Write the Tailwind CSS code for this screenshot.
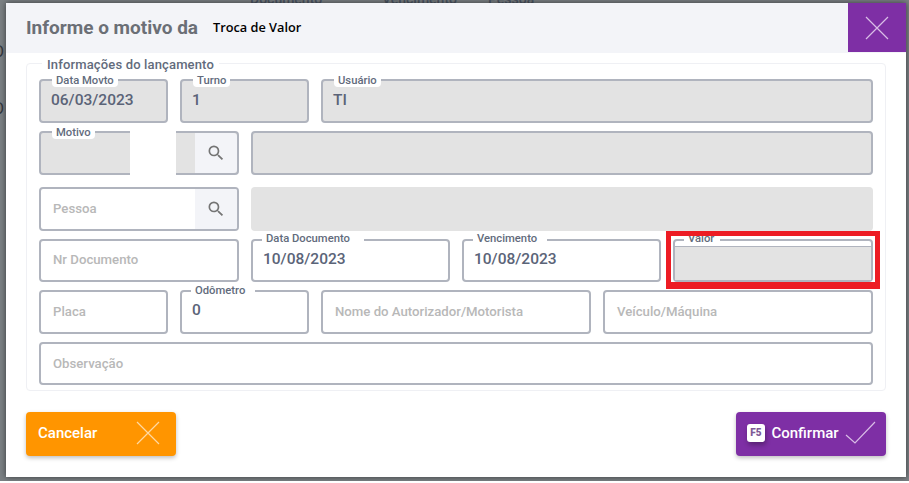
<!DOCTYPE html>
<html lang="pt-BR">
<head>
    <meta charset="UTF-8">
    <title>Informe o motivo da Troca de Valor</title>
    <script src="https://cdn.jsdelivr.net/npm/@tailwindcss/browser@4"></script>
</head>
<body class="bg-white font-['Roboto',sans-serif] w-[909px] h-[483px] overflow-hidden">

    <!-- fundo escurecido atras do modal -->
    <div class="relative h-[481px] bg-[#7b8084] pl-[6px] pt-[3px] overflow-hidden">
        <div class="absolute -top-[11px] left-[250px] flex text-[14px] font-medium text-[#4b5563]">
            <span class="w-[132px]">Documento</span><span class="w-[106px]">Vencimento</span><span>Pessoa</span>
        </div>
        <span class="absolute left-[-7px] top-[40px] text-[16px] text-[#33383d]">O</span>
        <span class="absolute left-[-7px] top-[97px] text-[16px] text-[#33383d]">O</span>

        <div class="relative w-[900px] h-[474px] bg-white flex flex-col shadow-[0_0_6px_rgba(0,0,0,0.55)]">
            <!-- cabecalho -->
            <div class="h-[50px] bg-[#f3f4f8] flex items-center justify-between">
                <div class="pl-[20px] flex items-center">
                    <span class="text-[19px] font-bold text-[#6b6f76] w-[187px]">Informe o motivo da</span>
                    <span class="font-['Open_Sans',sans-serif] text-[12.75px] font-semibold text-black">Troca de Valor</span>
                </div>
                <div class="w-[58px] h-[49px] self-start bg-[#7e2fa5] flex items-center justify-center">
                    <svg width="26" height="26" viewBox="0 0 26 26" fill="none" stroke="#d9bde6" stroke-width="1.2"><path d="M2 2 L24 24 M24 2 L2 24"/></svg>
                </div>
            </div>

            <!-- informacoes -->
            <div class="relative mx-[20px] mt-[10px] h-[328px] border border-[#eff0f4] rounded px-[12px] pt-[15px]">
                <span class="absolute left-[15px] -top-[6px] bg-white px-[5px] text-[13px] leading-[14px] font-medium text-[#626b7c] tracking-[0.15px]">Informações do lançamento</span>

                <div class="grid grid-cols-[129px_129px_1fr] gap-x-[12px] h-[44px]">
                    <div class="relative rounded border-2 border-[#b0b4be] bg-[#e3e3e3] pl-[10px] flex items-center text-[15.5px] font-medium text-[#5b6478]">
                        <span class="absolute left-[11px] -top-[6px] bg-white rounded px-[4px] text-[11.25px] leading-[12px] font-medium text-[#626b7c]">Data Movto</span>06/03/2023
                    </div>
                    <div class="relative rounded border-2 border-[#b0b4be] bg-[#e3e3e3] pl-[10px] flex items-center text-[15.5px] font-medium text-[#5b6478]">
                        <span class="absolute left-[11px] -top-[6px] bg-white rounded px-[4px] text-[11.25px] leading-[12px] font-medium text-[#626b7c]">Turno</span>1
                    </div>
                    <div class="relative rounded border-2 border-[#b0b4be] bg-[#e3e3e3] pl-[10px] flex items-center text-[15.5px] font-medium text-[#5b6478]">
                        <span class="absolute left-[11px] -top-[6px] bg-white rounded px-[4px] text-[11.25px] leading-[12px] font-medium text-[#626b7c]">Usuário</span>TI
                    </div>
                </div>

                <div class="grid grid-cols-[200px_1fr] gap-x-[12px] h-[44px] mt-[8px]">
                    <div class="relative rounded border-2 border-[#b0b4be] bg-[#e3e3e3] flex justify-end">
                        <span class="absolute left-[11px] -top-[6px] bg-white rounded px-[4px] text-[11.25px] leading-[12px] font-medium text-[#626b7c]">Motivo</span>
                        <div class="w-[42px] bg-[#f3f4f8] rounded-r flex items-center justify-center">
                            <svg width="20" height="20" viewBox="0 0 24 24" fill="#757575"><path d="M15.5 14h-.79l-.28-.27A6.47 6.47 0 0 0 16 9.5 6.5 6.5 0 1 0 9.5 16c1.61 0 3.09-.59 4.23-1.57l.27.28v.79l5 4.99L20.49 19l-4.99-5zm-6 0C7.01 14 5 11.99 5 9.5S7.01 5 9.5 5 14 7.01 14 9.5 11.99 14 9.5 14z"/></svg>
                        </div>
                        <!-- trecho apagado no print -->
                        <div class="absolute left-[89px] -top-[2px] -bottom-[2px] w-[46px] bg-white"></div>
                    </div>
                    <div class="rounded border-2 border-[#b0b4be] bg-[#e3e3e3]"></div>
                </div>

                <div class="grid grid-cols-[200px_1fr] gap-x-[12px] h-[44px] mt-[12px]">
                    <div class="rounded border-2 border-[#b0b4be] bg-white flex items-center justify-between overflow-hidden">
                        <span class="pl-[12px] text-[13.2px] font-medium text-[#b8b8b8]">Pessoa</span>
                        <div class="w-[42px] h-full bg-[#f3f4f8] flex items-center justify-center">
                            <svg width="20" height="20" viewBox="0 0 24 24" fill="#757575"><path d="M15.5 14h-.79l-.28-.27A6.47 6.47 0 0 0 16 9.5 6.5 6.5 0 1 0 9.5 16c1.61 0 3.09-.59 4.23-1.57l.27.28v.79l5 4.99L20.49 19l-4.99-5zm-6 0C7.01 14 5 11.99 5 9.5S7.01 5 9.5 5 14 7.01 14 9.5 11.99 14 9.5 14z"/></svg>
                        </div>
                    </div>
                    <div class="rounded bg-[#e3e3e3]"></div>
                </div>

                <div class="grid grid-cols-[200px_199px_199px_1fr] gap-x-[12px] h-[43px] mt-[8px]">
                    <div class="rounded border-2 border-[#b0b4be] bg-white pl-[12px] pb-[1px] flex items-center text-[13.2px] font-medium text-[#b8b8b8]">Nr Documento</div>
                    <div class="relative rounded border-2 border-[#b0b4be] bg-white pl-[10px] pb-[1px] flex items-center text-[15.5px] font-medium text-[#5b6478]">
                        <span class="absolute left-[9px] -top-[8px] bg-white px-[4px] pr-[14px] text-[11.25px] leading-[12px] font-medium text-[#626b7c]">Data Documento</span>10/08/2023
                    </div>
                    <div class="relative rounded border-2 border-[#b0b4be] bg-white pl-[10px] pb-[1px] flex items-center text-[15.5px] font-medium text-[#5b6478]">
                        <span class="absolute left-[9px] -top-[8px] bg-white px-[4px] pr-[10px] text-[11.25px] leading-[12px] font-medium text-[#626b7c]">Vencimento</span>10/08/2023
                    </div>
                    <div class="relative rounded border-2 border-[#b0b4be] bg-white flex flex-col">
                        <span class="absolute left-[9px] -top-[8px] bg-white px-[4px] pr-[6px] text-[11.25px] leading-[12px] font-medium text-[#626b7c]">Valor</span>
                        <div class="mt-[5px] flex-1 bg-[#e3e3e3] border-t border-[#b0b4be]"></div>
                        <!-- destaque vermelho -->
                        <div class="absolute -left-[9px] -right-[9px] -top-[10px] -bottom-[9px] border-[5px] border-b-[7px] border-[#ed1c24]"></div>
                    </div>
                </div>

                <div class="grid grid-cols-[129px_129px_270px_1fr] gap-x-[12px] h-[44px] mt-[8px]">
                    <div class="rounded border-2 border-[#b0b4be] bg-white pl-[12px] flex items-center text-[13.2px] font-medium text-[#b8b8b8]">Placa</div>
                    <div class="relative rounded border-2 border-[#b0b4be] bg-white pl-[10px] pb-[2px] flex items-center text-[15.5px] font-medium text-[#5b6478]">
                        <span class="absolute left-[9px] -top-[7px] bg-white px-[4px] pr-[10px] text-[11.25px] leading-[12px] font-medium text-[#626b7c]">Odômetro</span>0
                    </div>
                    <div class="rounded border-2 border-[#b0b4be] bg-white pl-[12px] flex items-center text-[13.2px] font-medium text-[#b8b8b8]">Nome do Autorizador/Motorista</div>
                    <div class="rounded border-2 border-[#b0b4be] bg-white pl-[12px] flex items-center text-[13.2px] font-medium text-[#b8b8b8]">Veículo/Máquina</div>
                </div>

                <div class="h-[43px] mt-[8px] rounded border-2 border-[#b0b4be] bg-white pl-[12px] flex items-center text-[13.2px] font-medium text-[#b8b8b8]">Observação</div>
            </div>

            <!-- botoes -->
            <div class="mx-[20px] mt-[21px] flex justify-between">
                <button class="w-[150px] h-[44px] rounded bg-[#ff9500] shadow-[0_2px_4px_rgba(0,0,0,0.25)] pl-[12px] pr-[16px] pb-[2px] flex items-center justify-between text-[15px] font-medium text-white">
                    Cancelar
                    <svg width="24" height="24" viewBox="0 0 24 24" fill="none" stroke="#ffd9a1" stroke-width="1.2"><path d="M1 1 L23 23 M23 1 L1 23"/></svg>
                </button>
                <button class="w-[150px] h-[44px] rounded bg-[#7e2fa5] shadow-[0_2px_4px_rgba(0,0,0,0.25)] pl-[11px] pr-[10px] pb-[2px] flex items-center justify-between text-[15px] font-medium text-white">
                    <span class="w-[18px] h-[18px] rounded-[3px] bg-white text-[#7e5a96] text-[10px] font-black leading-[18px] text-center shadow-[1px_3px_5px_rgba(0,0,0,0.3)]">F5</span>
                    Confirmar
                    <svg width="31" height="24" viewBox="0 0 31 24" fill="none" stroke="#d9bde6" stroke-width="1.2"><path d="M1 14 L10 22 L30 1"/></svg>
                </button>
            </div>
        </div>
    </div>
</body>
</html>
